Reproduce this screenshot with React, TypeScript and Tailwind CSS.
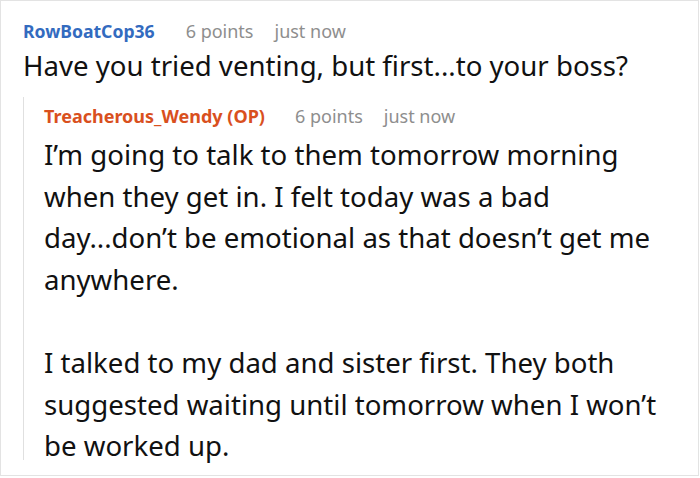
export default function App() {
  return (
    <div className="h-[478px] w-[700px] bg-white font-['Noto_Sans',sans-serif]">
      <div className="h-[476px] w-[699px] border border-[#e3e3e3] px-[22px] pt-[15px]">
        <div className="flex items-baseline text-[18px] leading-[30px]">
          <span className="mr-[31px] text-[17.6px] font-bold text-[#336bbf]">RowBoatCop36</span>
          <span className="mr-[21px] text-[#8e8e8e]">6 points</span>
          <span className="text-[#8e8e8e]">just now</span>
        </div>
        <p className="mt-[1px] text-[27.6px] leading-[36px] text-[#111]">Have you tried venting, but first...to your boss?</p>
        <div className="mt-[14px] h-[363px] border-l border-[#e0e0e0] pt-[4px] pl-[20px]">
          <div className="flex items-baseline text-[18px] leading-[30px]">
            <span className="mr-[30px] font-bold text-[#d9501e]">Treacherous_Wendy (OP)</span>
            <span className="mr-[21px] text-[#8e8e8e]">6 points</span>
            <span className="text-[#8e8e8e]">just now</span>
          </div>
          <p className="mt-[3px] text-[27.6px] leading-[41.6px] text-[#111]">
            I’m going to talk to them tomorrow morning when they get in. I felt today was a bad day...don’t be emotional as that doesn’t get me anywhere.
          </p>
          <p className="mt-[41.6px] text-[27.6px] leading-[41.6px] text-[#111]">
            I talked to my dad and sister first. They both suggested waiting until tomorrow when I won’t be worked up.
          </p>
        </div>
      </div>
    </div>
  )
}
